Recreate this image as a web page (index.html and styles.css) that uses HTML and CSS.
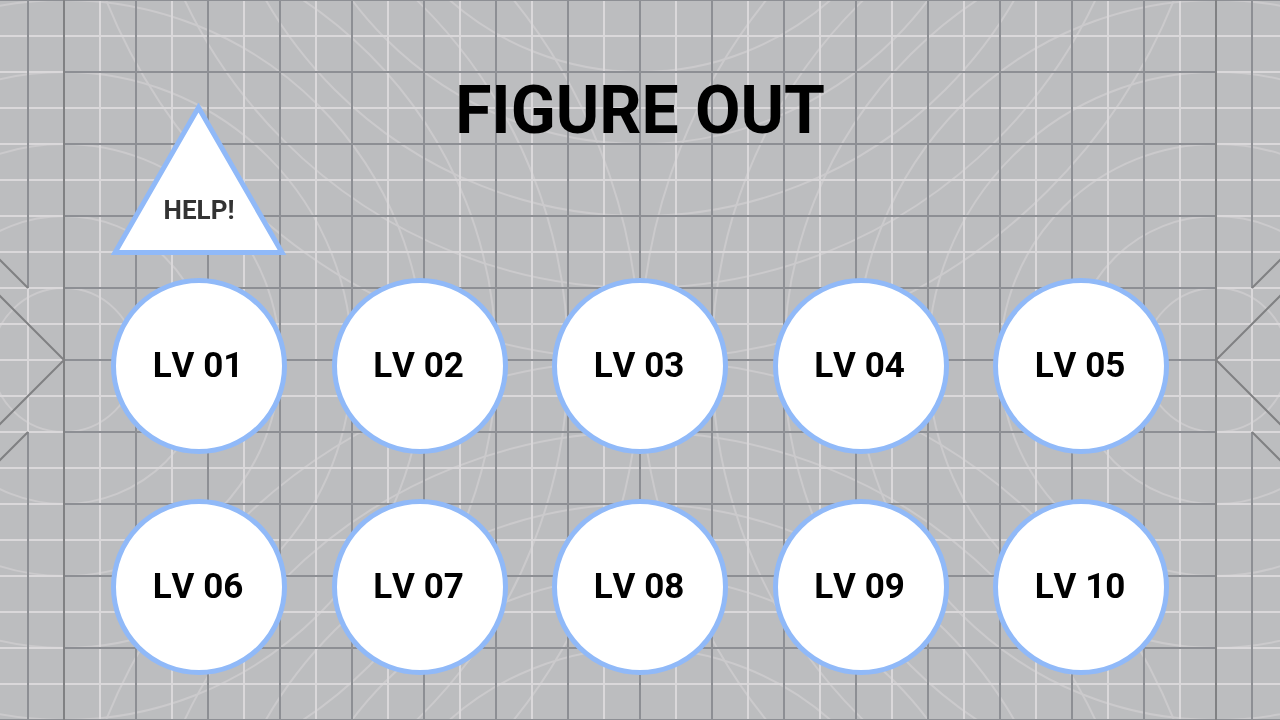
FILE: index.html
```
<!DOCTYPE html>
<html lang="en">
<head>
<meta charset="utf-8">
<meta name="viewport" content="width=device-width, initial-scale=1">
<title>Figure Out</title>
<link rel="stylesheet" href="styles.css">
</head>
<body>
<svg class="backdrop" viewBox="0 0 1280 720" preserveAspectRatio="xMidYMid slice" aria-hidden="true">
  <defs>
    <g id="rings">
      <circle r="72"/><circle r="144"/><circle r="216"/><circle r="288"/>
      <circle r="360"/><circle r="432"/><circle r="504"/><circle r="576"/>
    </g>
    <g id="edge">
      <path d="M64 0V720"/>
      <path d="M-2 258L28 288M-2 294L64 360L-2 426M-2 462L28 432"/>
    </g>
    <pattern id="light" x="64" y="0" width="72" height="72" patternUnits="userSpaceOnUse">
      <path class="light" d="M36 0V72M0 36H72"/>
    </pattern>
    <pattern id="dark" x="100" y="36" width="72" height="72" patternUnits="userSpaceOnUse">
      <path class="dark" d="M36 0V72M0 36H72"/>
    </pattern>
  </defs>
  <g class="arc">
    <use href="#rings" x="64" y="360"/>
    <use href="#rings" x="1216" y="360"/>
    <use href="#rings" x="640" y="-216"/>
    <use href="#rings" x="640" y="936"/>
  </g>
  <rect x="64" width="1152" height="720" fill="url(#light)"/>
  <path class="light" d="M0 36H64M0 72H64M0 108H64M0 144H64M0 180H64M0 216H64M0 252H64M0 288H64M0 324H64M0 360H64M0 396H64M0 432H64M0 468H64M0 504H64M0 540H64M0 576H64M0 612H64M0 648H64M0 684H64M28 288V432"/>
  <path class="light" d="M1216 36H1280M1216 72H1280M1216 108H1280M1216 144H1280M1216 180H1280M1216 216H1280M1216 252H1280M1216 288H1280M1216 324H1280M1216 360H1280M1216 396H1280M1216 432H1280M1216 468H1280M1216 504H1280M1216 540H1280M1216 576H1280M1216 612H1280M1216 648H1280M1216 684H1280M1252 288V432"/>
  <rect x="64" width="1152" height="720" fill="url(#dark)"/>
  <path class="dark" d="M28 0V288M28 432V720M1252 0V288M1252 432V720M0 0H1280M0 720H1280"/>
  <g class="edge">
    <use href="#edge"/>
    <use href="#edge" transform="translate(1280) scale(-1 1)"/>
  </g>
</svg>
<main class="menu">
  <header class="top">
    <button class="help" type="button">
      <svg class="help-shape" viewBox="0 0 176 152" aria-hidden="true"><path d="M87.500 4.500L171 149.500H4Z"/></svg>
      <span class="help-label">HELP!</span>
    </button>
    <h1 class="title">FIGURE OUT</h1>
  </header>
  <nav class="levels" aria-label="Levels">
    <button class="level" type="button">LV 01</button>
    <button class="level" type="button">LV 02</button>
    <button class="level" type="button">LV 03</button>
    <button class="level" type="button">LV 04</button>
    <button class="level" type="button">LV 05</button>
    <button class="level" type="button">LV 06</button>
    <button class="level" type="button">LV 07</button>
    <button class="level" type="button">LV 08</button>
    <button class="level" type="button">LV 09</button>
    <button class="level" type="button">LV 10</button>
  </nav>
</main>
</body>
</html>
```
FILE: styles.css
```
* {
  box-sizing: border-box;
}

body {
  margin: 0;
  min-height: 100vh;
  background: #bcbdbf;
  color: #000;
  font-family: Roboto, "Liberation Sans", sans-serif;
  font-kerning: none;
}

.backdrop {
  position: fixed;
  inset: 0;
  width: 100%;
  height: 100%;
  fill: none;
  stroke-width: 2;
}

.arc {
  stroke: #cbcacc;
}

.light {
  stroke: #dad8da;
}

.dark {
  stroke: #8d8f94;
}

.edge {
  stroke: #808183;
}

.menu {
  position: relative;
  padding: 72px 111px 44px;
}

.top {
  display: grid;
  grid-template-columns: 176px 1fr 176px;
  align-items: start;
  margin-bottom: 23px;
}

.help {
  display: grid;
  justify-items: center;
  align-items: end;
  margin-top: 31px;
  padding: 0;
  border: 0;
  background: none;
  color: #333;
  font: 700 26px/32px Roboto, "Liberation Sans", sans-serif;
  font-kerning: none;
  cursor: pointer;
}

.help-shape,
.help-label {
  grid-area: 1 / 1;
}

.help-shape {
  display: block;
  width: 100%;
  fill: #fff;
  stroke: #90b9f8;
  stroke-width: 5;
}

.help-label {
  padding-bottom: 29px;
}

.title {
  margin: 0;
  text-align: center;
  font-size: 66px;
  line-height: 78px;
  font-weight: 700;
}

.levels {
  display: grid;
  grid-template-columns: repeat(5, 176px);
  justify-content: space-between;
  row-gap: 45px;
}

.level {
  aspect-ratio: 1;
  padding: 0 2px 0 0;
  border: 5px solid #90b9f8;
  border-radius: 50%;
  background: #fff;
  color: #000;
  font: 700 35px/40px Roboto, "Liberation Sans", sans-serif;
  font-kerning: none;
  cursor: pointer;
}
```
